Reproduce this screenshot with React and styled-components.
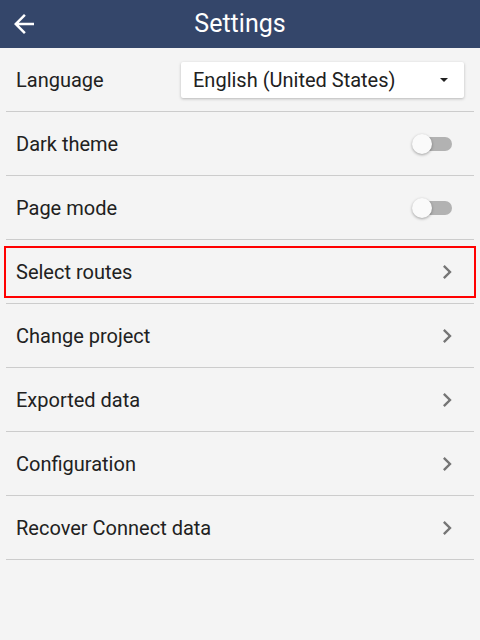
import React from "react";
import styled, { createGlobalStyle } from "styled-components";

const Global = createGlobalStyle`
  html, body { margin: 0; padding: 0; background: #f4f4f4; }
  body { font-family: Roboto, "Noto Sans", sans-serif; }
  * { box-sizing: border-box; }
`;

const Page = styled.div`
  width: 480px;
  min-height: 640px;
  background: #f4f4f4;
`;

const Header = styled.header`
  height: 48px;
  background: #34466a;
  display: flex;
  align-items: center;
  position: relative;
  justify-content: center;
`;

const BackButton = styled.button`
  position: absolute;
  left: 9px;
  top: 9px;
  width: 30px;
  height: 30px;
  padding: 0;
  border: none;
  background: none;
  display: flex;
  align-items: center;
  justify-content: center;
`;

const Title = styled.h1`
  margin: 0;
  font-size: 25px;
  font-weight: 400;
  color: #fff;
  line-height: 48px;
`;

const List = styled.div`
  padding: 0 6px;
  display: flex;
  flex-direction: column;
`;

const Row = styled.div`
  height: 64px;
  border-bottom: 1px solid #cccccc;
  display: flex;
  align-items: center;
  justify-content: space-between;
  padding: 0 10px;
  position: relative;
`;

const Highlight = styled.div`
  position: absolute;
  left: -2px;
  right: -2px;
  top: 6px;
  bottom: 5px;
  border: 2px solid #ff0000;
  pointer-events: none;
`;

const Label = styled.span`
  font-size: 20px;
  color: #212121;
`;

const Select = styled.div`
  width: 283px;
  height: 36px;
  background: #fff;
  border-radius: 2px;
  box-shadow: 0 1px 3px rgba(0, 0, 0, 0.25);
  display: flex;
  align-items: center;
  justify-content: space-between;
  padding: 0 16px 0 12px;
  font-size: 20px;
  color: #212121;
`;

const Caret = styled.span`
  width: 0;
  height: 0;
  border-left: 4px solid transparent;
  border-right: 4px solid transparent;
  border-top: 4px solid #212121;
`;

const Switch = styled.div`
  width: 40px;
  height: 20px;
  position: relative;
  display: flex;
  align-items: center;
  margin-right: 12px;
`;

const Track = styled.div`
  margin-left: 4px;
  width: 36px;
  height: 14px;
  border-radius: 7px;
  background: #b2b2b2;
`;

const Knob = styled.div`
  position: absolute;
  left: 0;
  top: 0;
  width: 20px;
  height: 20px;
  border-radius: 50%;
  background: #fafafa;
  box-shadow: 0 1px 3px rgba(0, 0, 0, 0.35);
`;

const ChevronIcon = styled.svg`
  width: 28px;
  height: 28px;
  margin-right: 3px;
`;

const Chevron = () => (
  <ChevronIcon viewBox="0 0 24 24">
    <path d="M8.59 16.59 13.17 12 8.59 7.41 10 6l6 6-6 6z" fill="#757575" />
  </ChevronIcon>
);

const Toggle = () => (
  <Switch>
    <Track />
    <Knob />
  </Switch>
);

const navItems = [
  { label: "Select routes", highlighted: true },
  { label: "Change project" },
  { label: "Exported data" },
  { label: "Configuration" },
  { label: "Recover Connect data" },
];

export default function App() {
  return (
    <Page>
      <Global />
      <Header>
        <BackButton aria-label="Back">
          <svg width="30" height="30" viewBox="0 0 24 24">
            <path d="M20 11H7.83l5.59-5.59L12 4l-8 8 8 8 1.41-1.41L7.83 13H20v-2z" fill="#fff" />
          </svg>
        </BackButton>
        <Title>Settings</Title>
      </Header>
      <List>
        <Row>
          <Label>Language</Label>
          <Select>
            <span>English (United States)</span>
            <Caret />
          </Select>
        </Row>
        <Row>
          <Label>Dark theme</Label>
          <Toggle />
        </Row>
        <Row>
          <Label>Page mode</Label>
          <Toggle />
        </Row>
        {navItems.map((it) => (
          <Row key={it.label}>
            {it.highlighted && <Highlight />}
            <Label>{it.label}</Label>
            <Chevron />
          </Row>
        ))}
      </List>
    </Page>
  );
}
